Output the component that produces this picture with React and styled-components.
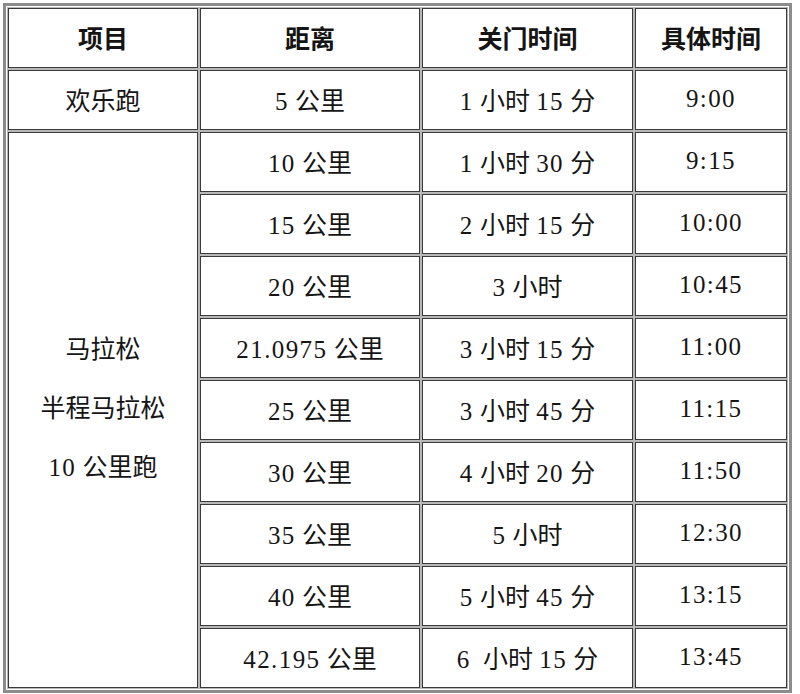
import React from "react";
import styled, { createGlobalStyle } from "styled-components";

const GlobalStyle = createGlobalStyle`
  html, body {
    margin: 0;
    padding: 0;
    background: #ffffff;
  }
  body {
    font-family: "Liberation Serif", "Noto Sans CJK SC", serif;
    color: #111;
  }
`;

const rows = [
  { distance: "10 公里", close: "1 小时 30 分", time: "9:15" },
  { distance: "15 公里", close: "2 小时 15 分", time: "10:00" },
  { distance: "20 公里", close: "3 小时", time: "10:45" },
  { distance: "21.0975 公里", close: "3 小时 15 分", time: "11:00" },
  { distance: "25 公里", close: "3 小时 45 分", time: "11:15" },
  { distance: "30 公里", close: "4 小时 20 分", time: "11:50" },
  { distance: "35 公里", close: "5 小时", time: "12:30" },
  { distance: "40 公里", close: "5 小时 45 分", time: "13:15" },
  { distance: "42.195 公里", close: "6  小时 15 分", time: "13:45" },
];

const Page = styled.div`
  padding: 3px 0 0 3px;
`;

const Table = styled.table`
  width: 789px;
  border-collapse: separate;
  border-spacing: 2px;
  border: 3px solid #8c8c8c;
  table-layout: fixed;
`;

const Cell = styled.td`
  height: 60px;
  padding: 0 0 3px;
  box-sizing: border-box;
  border: 1px solid #3a3a3a;
  box-shadow: 0 0 0 1px #b8b8b8;
  text-align: center;
  vertical-align: middle;
  font-size: 25px;
  font-weight: ${({ $head }) => ($head ? 700 : 400)};
  white-space: pre;
  color: #151515;
`;

const Num = styled.span`
  letter-spacing: 1.4px;
`;

const Stack = styled.div`
  display: flex;
  flex-direction: column;
  align-items: center;
  line-height: 59px;
`;

// latin runs (digits, dot, colon) get the wider spacing of the original song font
const Text = ({ children }) =>
  String(children)
    .split(/([0-9.:]+)/)
    .map((part, i) =>
      /^[0-9.:]+$/.test(part) ? <Num key={i}>{part}</Num> : part
    );

const App = () => {
  return (
    <Page>
      <GlobalStyle />
      <Table>
        <colgroup>
          <col style={{ width: 190 }} />
          <col style={{ width: 220 }} />
          <col style={{ width: 211 }} />
          <col />
        </colgroup>
        <tbody>
          <tr>
            <Cell $head>项目</Cell>
            <Cell $head>距离</Cell>
            <Cell $head>关门时间</Cell>
            <Cell $head>具体时间</Cell>
          </tr>
          <tr>
            <Cell>欢乐跑</Cell>
            <Cell><Text>5 公里</Text></Cell>
            <Cell><Text>1 小时 15 分</Text></Cell>
            <Cell><Text>9:00</Text></Cell>
          </tr>
          {rows.map((r, i) => (
            <tr key={r.distance}>
              {i === 0 && (
                <Cell rowSpan={rows.length}>
                  <Stack>
                    <span>马拉松</span>
                    <span>半程马拉松</span>
                    <span><Text>10 公里跑</Text></span>
                  </Stack>
                </Cell>
              )}
              <Cell><Text>{r.distance}</Text></Cell>
              <Cell><Text>{r.close}</Text></Cell>
              <Cell><Text>{r.time}</Text></Cell>
            </tr>
          ))}
        </tbody>
      </Table>
    </Page>
  );
};

export default App;
